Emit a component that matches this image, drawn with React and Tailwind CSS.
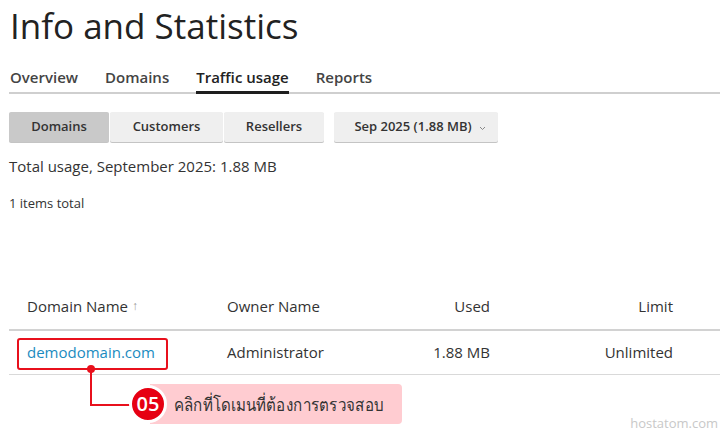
import React from 'react';

const tabs = ['Overview', 'Domains', 'Traffic usage', 'Reports'];
const groups = [
  { label: 'Domains', w: 'w-[100px]', active: true },
  { label: 'Customers', w: 'w-[113px]' },
  { label: 'Resellers', w: 'w-[100px]' },
];

const App = () => {
  return (
    <div className="relative w-[720px] h-[432px] overflow-hidden bg-white text-[#222] font-['Open_Sans',sans-serif]">
      <div className="pl-[9px] pt-[4px]">
        <h1 className="text-[35px] leading-[44px] font-normal text-[#222] pl-[1px]">Info and Statistics</h1>

        {/* tabs */}
        <div className="mt-[19px] flex gap-[27px] border-b-2 border-[#cfcfcf] pl-[1px]">
          {tabs.map((t) => (
            <div
              key={t}
              className={
                'text-[15px] leading-[20px] font-semibold pb-[4px] -mb-[2px] border-b-[3px] ' +
                (t === 'Traffic usage' ? 'border-[#1e1e1e] text-[#222]' : 'border-transparent text-[#444]')
              }
            >
              {t}
            </div>
          ))}
        </div>

        {/* button groups */}
        <div className="mt-[18px] flex items-center">
          <div className="flex gap-[1px]">
            {groups.map((g) => (
              <div
                key={g.label}
                className={
                  g.w +
                  ' h-[30px] flex items-center justify-center text-[13px] font-semibold text-[#333] rounded-[2px] shadow-[0_1px_0_#c4c4c4] ' +
                  (g.active ? 'bg-[#c9c9c9]' : 'bg-[#efefef]')
                }
              >
                {g.label}
              </div>
            ))}
          </div>
          <div className="ml-[10px] w-[164px] h-[30px] flex items-center justify-center gap-[7px] pl-[8px] bg-[#efefef] rounded-[2px] shadow-[0_1px_0_#c4c4c4] text-[13px] font-semibold text-[#333]">
            <span>Sep 2025 (1.88 MB)</span>
            <svg width="7" height="5" viewBox="0 0 7 5" className="mt-[2px]">
              <path d="M1 1l2.5 2.5L6 1" fill="none" stroke="#888" strokeWidth="1" />
            </svg>
          </div>
        </div>

        <div className="mt-[13px] text-[15px] leading-[22px] text-[#333]">Total usage, September 2025: 1.88 MB</div>
        <div className="mt-[17px] text-[13px] leading-[18px] text-[#333]">1 items total</div>

        {/* table */}
        <div className="mt-[71px] text-[15px] text-[#333]">
          <div className="grid grid-cols-[200px_140px_141px_183px_1fr] h-[48px] items-center border-b-2 border-[#d2d2d2]">
            <div className="pl-[18px] flex items-center gap-[4px]">
              Domain Name <span className="text-[#999] text-[12px]">↑</span>
            </div>
            <div className="pl-[18px]">Owner Name</div>
            <div className="text-right">Used</div>
            <div className="text-right">Limit</div>
            <div />
          </div>
          <div className="grid grid-cols-[200px_140px_141px_183px_1fr] h-[44px] items-center border-b border-[#d9d9d9]">
            <div className="pl-[18px] text-[#1b8bc0]">demodomain.com</div>
            <div className="pl-[18px]">Administrator</div>
            <div className="text-right">1.88 MB</div>
            <div className="text-right">Unlimited</div>
            <div />
          </div>
        </div>
      </div>

      {/* annotation overlay */}
      <div className="absolute left-[17px] top-[338px] w-[151px] h-[32px] border-2 border-[#e8101c] rounded-[3px]" />
      <div className="absolute left-[87px] top-[365px] w-[8px] h-[8px] rounded-full bg-[#e8101c]" />
      <div className="absolute left-[90px] top-[369px] w-[2px] h-[37px] bg-[#e8101c]" />
      <div className="absolute left-[90px] top-[404px] w-[42px] h-[2px] bg-[#e8101c]" />
      <div className="absolute left-[150px] top-[384px] w-[252px] h-[40px] bg-[#ffccd1] rounded-r-[4px] flex items-center pl-[24px]">
        <span className="whitespace-nowrap text-[18px] text-[#333] font-['Noto_Sans',sans-serif] origin-left scale-x-[0.84]">
          คลิกที่โดเมนที่ต้องการตรวจสอบ
        </span>
      </div>
      <div className="absolute left-[129px] top-[385px] w-[38px] h-[38px] rounded-full bg-[#e60012] border-[3px] border-white flex items-center justify-center text-white text-[20px] font-semibold">
        05
      </div>

      <div className="absolute right-[2px] top-[414px] text-[13px] text-[#c8c8c8]">hostatom.com</div>
    </div>
  );
};

export default App;
